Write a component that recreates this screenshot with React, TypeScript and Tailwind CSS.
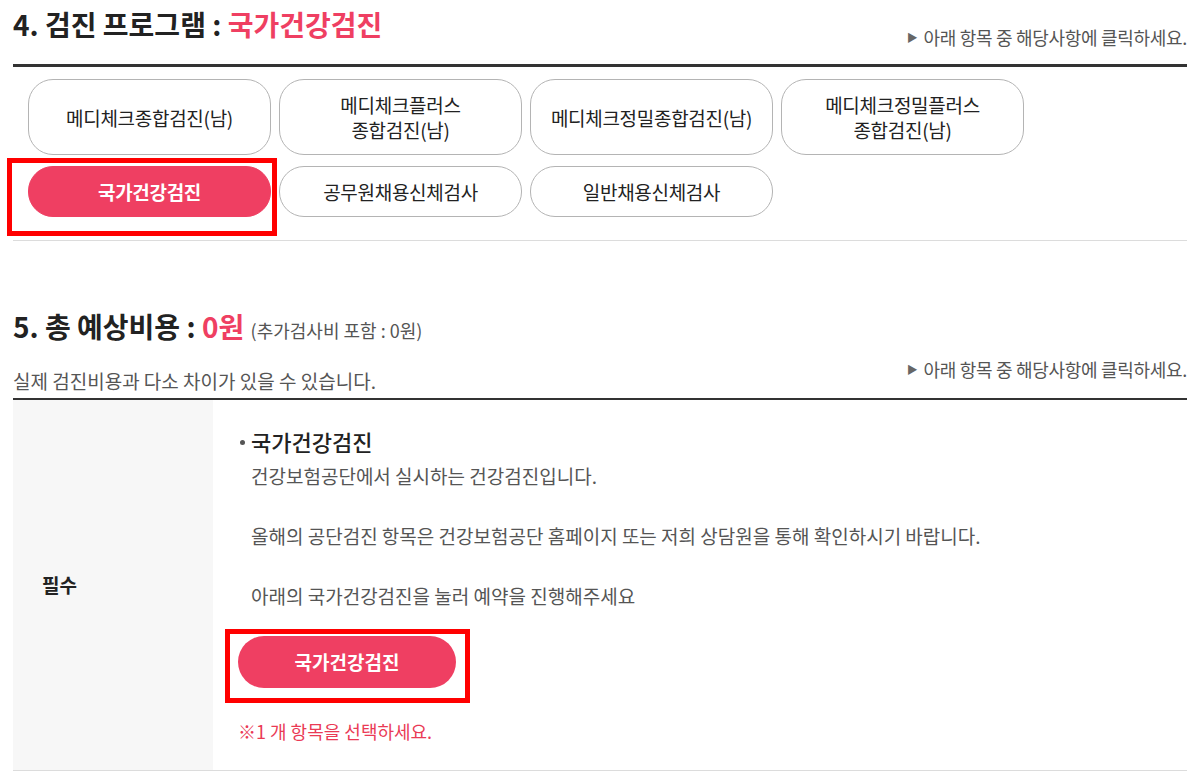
import React from "react";

const FONT = { fontFamily: '"Noto Sans CJK KR", "Noto Sans", sans-serif' };

const programs: { label: React.ReactNode; active?: boolean; boxed?: boolean }[] = [
  { label: "메디체크종합검진(남)" },
  { label: <>메디체크플러스<br />종합검진(남)</> },
  { label: "메디체크정밀종합검진(남)" },
  { label: <>메디체크정밀플러스<br />종합검진(남)</> },
  { label: "국가건강검진", active: true, boxed: true },
  { label: "공무원채용신체검사" },
  { label: "일반채용신체검사" },
];

function Note({ className = "" }: { className?: string }) {
  return (
    <div className={`flex items-center text-[18px] leading-[22px] text-[#555] tracking-[-0.3px] whitespace-nowrap ${className}`}>
      <span className="text-[11px] mr-[6px] text-[#666]">▶</span>
      아래 항목 중 해당사항에 클릭하세요.
    </div>
  );
}

export default function App() {
  return (
    <div className="w-[1187px] bg-white overflow-hidden" style={FONT}>
      <div className="pl-[13px]">
        {/* Section 4 */}
        <div className="flex justify-between items-start">
          <h2 className="mt-[6px] text-[28px] leading-[36px] font-bold text-[#222] whitespace-nowrap">
            4. 검진 프로그램 : <span className="text-[#ef3f62]">국가건강검진</span>
          </h2>
          <Note className="mt-[26px]" />
        </div>
        <div className="mt-[16px] h-[3px] bg-[#333]" />
        <div className="mt-[12px] pl-[15px] grid grid-cols-[repeat(4,243px)] gap-x-[8px] gap-y-[11px]">
          {programs.map((p, i) => (
            <div key={i} className="relative">
              {p.boxed && (
                <div className="absolute left-[-21px] top-[-8px] w-[270px] h-[78px] border-[5px] border-[#ff0000] pointer-events-none" />
              )}
              <button
                className={`relative w-full h-full flex items-center justify-center text-center py-3 text-[19px] leading-[25px] tracking-[-0.3px] rounded-[25px] border ${
                  p.active
                    ? "bg-[#ef3f62] border-[#ef3f62] text-white font-bold"
                    : "bg-white border-[#b4b4b4] text-[#222]"
                }`}
                style={FONT}
              >
                <span>{p.label}</span>
              </button>
            </div>
          ))}
        </div>
        <div className="mt-[23px] h-px bg-[#dcdcdc]" />

        {/* Section 5 */}
        <h2 className="mt-[67px] h-[36px] text-[28px] leading-[36px] font-bold text-[#222] whitespace-nowrap">
          5. 총 예상비용 : <span className="text-[#ef3f62]">0원</span>{" "}
          <span className="text-[18px] leading-none font-normal text-[#555]">(추가검사비 포함 : 0원)</span>
        </h2>
        <div className="flex justify-between items-start">
          <p className="mt-[25px] text-[19px] leading-[24px] text-[#555]">
            실제 검진비용과 다소 차이가 있을 수 있습니다.
          </p>
          <Note className="mt-[14px]" />
        </div>
        <div className="mt-[5px] h-[2px] bg-[#333]" />
        <div className="flex border-b border-[#dcdcdc]">
          <div className="w-[200px] bg-[#f7f7f7] flex items-center pl-[29px] text-[19px] font-bold text-[#222]">
            필수
          </div>
          <div className="flex-1 pl-[25px] pt-[26px] pb-[27px]">
            <div className="flex items-center text-[22px] leading-[30px] font-medium text-[#222] mb-[5px]">
              <span className="w-[5px] h-[5px] rounded-full bg-[#555] ml-[2px] mr-[6px] mt-[3px]" />
              국가건강검진
            </div>
            <div className="pl-[13px] text-[19px] leading-[30px] text-[#555]">
              건강보험공단에서 실시하는 건강검진입니다.
              <br />
              <br />
              올해의 공단검진 항목은 건강보험공단 홈페이지 또는 저희 상담원을 통해 확인하시기 바랍니다.
              <br />
              <br />
              아래의 국가건강검진을 눌러 예약을 진행해주세요
            </div>
            <div className="relative mt-[25px] w-[218px]">
              <div className="absolute left-[-13px] top-[-7px] w-[245px] h-[74px] border-[5px] border-[#ff0000] pointer-events-none" />
              <button
                className="relative w-[218px] h-[52px] rounded-full bg-[#ef3f62] text-white text-[19px] font-bold"
                style={FONT}
              >
                국가건강검진
              </button>
            </div>
            <p className="mt-[31px] text-[18px] leading-[24px] text-[#ea3a55]">
              ※1 개 항목을 선택하세요.
            </p>
          </div>
        </div>
      </div>
    </div>
  );
}
